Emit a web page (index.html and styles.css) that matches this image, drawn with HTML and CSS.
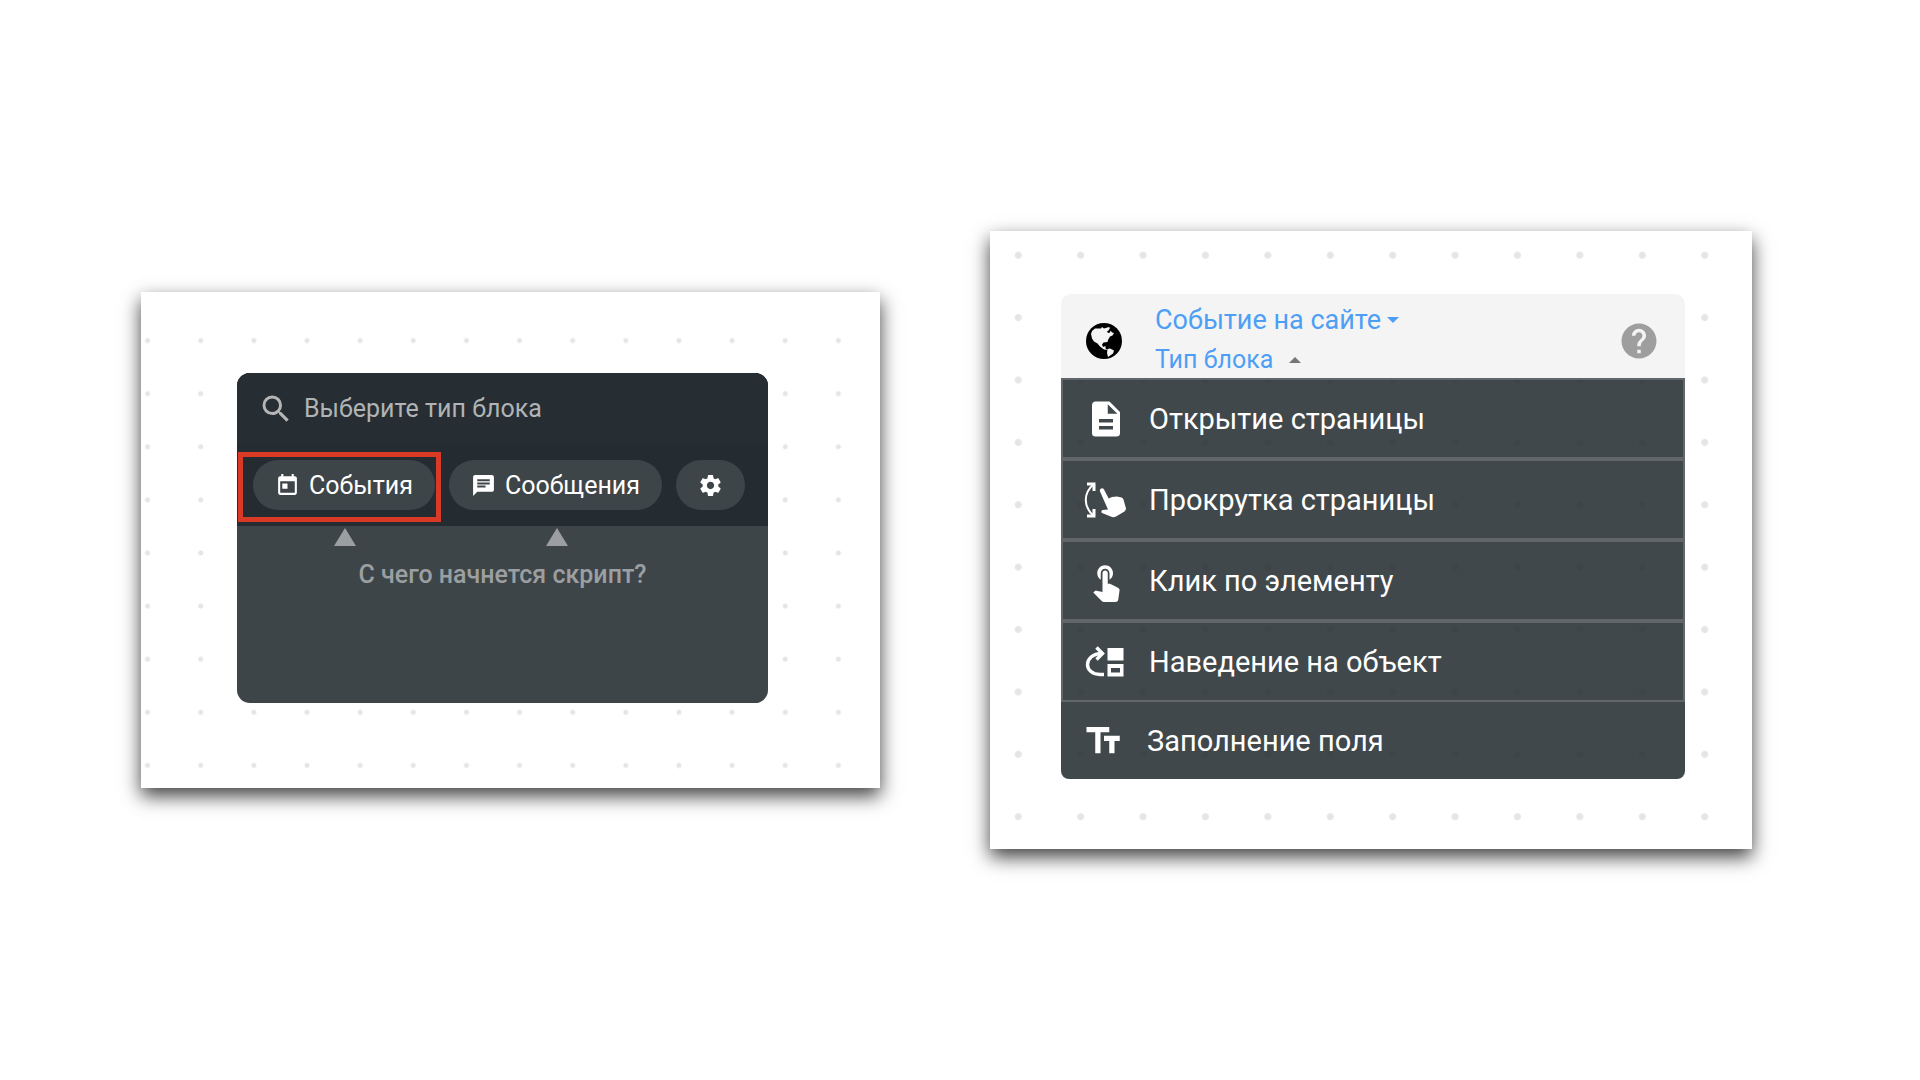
FILE: index.html
```html
<!DOCTYPE html>
<html lang="ru">
<head>
  <meta charset="UTF-8">
  <meta name="viewport" content="width=device-width, initial-scale=1.0">
  <title>Конструктор скриптов</title>
  <link rel="stylesheet" href="styles.css">
</head>
<body>
  <main class="boards">
    <section class="board board-start">
      <div class="picker">
        <div class="picker-head">
          <label class="search">
            <svg class="search-icon" viewBox="0 0 24 24"><path d="M15.5 14h-.79l-.28-.27A6.47 6.47 0 0 0 16 9.5 6.5 6.5 0 1 0 9.5 16c1.61 0 3.09-.59 4.23-1.57l.27.28v.79l5 4.99L20.49 19l-4.99-5zm-6 0C7.01 14 5 11.99 5 9.5S7.01 5 9.5 5 14 7.01 14 9.5 11.99 14 9.5 14z"/></svg>
            <input type="text" placeholder="Выберите тип блока" aria-label="Выберите тип блока">
          </label>
          <div class="tabs">
            <button type="button" class="tab tab-marked">
              <svg class="tab-icon" viewBox="0 0 24 24"><path d="M19 3h-1V1h-2v2H8V1H6v2H5c-1.11 0-1.99.9-1.99 2L3 19c0 1.1.89 2 2 2h14c1.1 0 2-.9 2-2V5c0-1.1-.9-2-2-2zm0 16H5V8h14v11zM7 10h5v5H7z"/></svg>
              События
            </button>
            <button type="button" class="tab">
              <svg class="tab-icon" viewBox="0 0 24 24"><path d="M20 2H4c-1.1 0-1.99.9-1.99 2L2 22l4-4h14c1.1 0 2-.9 2-2V4c0-1.1-.9-2-2-2zM6 9h12v2H6V9zm8 5H6v-2h8v2zm4-6H6V6h12v2z"/></svg>
              Сообщения
            </button>
            <button type="button" class="tab" aria-label="Настройки">
              <svg class="tab-icon" viewBox="0 0 24 24"><path d="M19.43 12.98c.04-.32.07-.64.07-.98s-.03-.66-.07-.98l2.11-1.65c.19-.15.24-.42.12-.64l-2-3.46c-.12-.22-.39-.3-.61-.22l-2.49 1c-.52-.4-1.08-.73-1.69-.98l-.38-2.65C14.46 2.18 14.25 2 14 2h-4c-.25 0-.46.18-.49.42l-.38 2.65c-.61.25-1.17.59-1.69.98l-2.49-1c-.23-.09-.49 0-.61.22l-2 3.46c-.13.22-.07.49.12.64l2.11 1.65c-.04.32-.07.65-.07.98s.03.66.07.98l-2.11 1.65c-.19.15-.24.42-.12.64l2 3.46c.12.22.39.3.61.22l2.49-1c.52.4 1.08.73 1.69.98l.38 2.65c.03.24.24.42.49.42h4c.25 0 .46-.18.49-.42l.38-2.65c.61-.25 1.17-.59 1.69-.98l2.49 1c.23.09.49 0 .61-.22l2-3.46c.12-.22.07-.49-.12-.64l-2.11-1.65zM12 15.5c-1.93 0-3.5-1.57-3.5-3.5s1.57-3.5 3.5-3.5 3.5 1.57 3.5 3.5-1.57 3.5-3.5 3.5z"/></svg>
            </button>
          </div>
        </div>
        <div class="picker-body">
          <div class="pointers">
            <svg viewBox="0 0 22 18"><path d="M11 0l11 18H0z"/></svg>
            <svg viewBox="0 0 22 18"><path d="M11 0l11 18H0z"/></svg>
          </div>
          <p class="question">С чего начнется скрипт?</p>
        </div>
      </div>
    </section>

    <section class="board board-event">
      <div class="block-head">
        <svg class="globe" viewBox="0 0 36 36">
          <circle cx="18" cy="18" r="18"/>
          <path class="land" d="M6 8L9 5.500 15 5.500 16 4 18 5.500 23 4 24 5 22.500 7.500 21 8.500 22 10 24 9.500 24.500 7.500 26 9.500 28 10 26.500 12.500 24 13.500 22 17 21.500 19 17.500 19.500 16 21.500 17 24 19.500 23 19.500 25.500 21.500 27 18 26.500 14 23.500 11.500 20.500 8 18.500 6 15.500 5 11z"/>
          <path class="land" d="M21.500 26l2.500-.500 4 2-1 3-5 3.500-1-4z"/>
        </svg>
        <div class="titles">
          <button type="button" class="title">Событие на сайте <svg class="caret" viewBox="0 0 12 6"><path d="M0 0h12L6 6z"/></svg></button>
          <button type="button" class="subtitle">Тип блока <svg class="caret caret-up" viewBox="0 0 12 6"><path d="M0 6h12L6 0z"/></svg></button>
        </div>
        <button type="button" class="help" aria-label="Справка">
          <svg viewBox="0 0 24 24"><path d="M12 2C6.48 2 2 6.48 2 12s4.48 10 10 10 10-4.48 10-10S17.52 2 12 2zm1 17h-2v-2h2v2zm2.07-7.75l-.9.92C13.45 12.9 13 13.5 13 15h-2v-.5c0-1.1.45-2.1 1.17-2.83l1.24-1.26c.37-.36.59-.86.59-1.41 0-1.1-.9-2-2-2s-2 .9-2 2H8c0-2.21 1.79-4 4-4s4 1.79 4 4c0 .88-.36 1.68-.93 2.25z"/></svg>
        </button>
      </div>
      <div class="types">
        <button type="button" class="type">
          <svg class="type-icon" viewBox="0 0 24 24"><path d="M13 9h5.500L13 3.500V9M6 2h8l6 6v12a2 2 0 0 1-2 2H6a2 2 0 0 1-2-2V4c0-1.110.89-2 2-2m10 12v-2H8v2h8m0 4v-2H8v2h8z"/></svg>
          Открытие страницы
        </button>
        <button type="button" class="type">
          <svg class="type-icon" viewBox="0 0 42 42">
            <path class="line" stroke-width="2" d="M9 5C-2 14-2 28 9 37"/>
            <path class="line" stroke-width="3" d="M2 5h7v7M2 37h7v-7"/>
            <path d="M15 12.500C14 10 17.500 8 19 10.500l4.700 9 3.300-1.500 5-.500 4.500 1q1.500.500 2 2l2.500 9q0 1.700-1.500 3L31 37.500q-2 1-4 .500l-10-4q-1.500-1.500.500-3l5.500-.500z"/>
          </svg>
          Прокрутка страницы
        </button>
        <button type="button" class="type">
          <svg class="type-icon" viewBox="0 0 24 24"><path d="M9 11.240V7.500C9 6.120 10.120 5 11.500 5S14 6.120 14 7.500v3.740c1.210-.81 2-2.180 2-3.740C16 5.010 13.990 3 11.500 3S7 5.010 7 7.500c0 1.560.79 2.930 2 3.740zm9.840 4.630l-4.540-2.260c-.17-.07-.35-.11-.54-.11H13v-6c0-.83-.67-1.500-1.500-1.500S10 6.670 10 7.500v10.740l-3.430-.72c-.08-.01-.15-.03-.24-.03-.31 0-.59.13-.79.33l-.79.8 4.940 4.940c.27.27.65.44 1.060.44h6.790c.75 0 1.330-.55 1.440-1.280l.75-5.270c.01-.07.02-.14.02-.2 0-.62-.38-1.160-.91-1.380z"/></svg>
          Клик по элементу
        </button>
        <button type="button" class="type">
          <svg class="type-icon" viewBox="0 0 42 42">
            <path class="line" stroke-width="3.400" d="M19 33.500h-4C7.500 33.500 2.500 29 2.500 23.500S7.500 12.500 17 12.500"/>
            <path class="line" stroke-width="3.400" d="M11.500 6.500l6 6-6 6"/>
            <path fill-rule="evenodd" d="M22.500 7h16v12.500h-16zM22.500 23h16v12.500h-16zM26 27v4.500h9V27z"/>
          </svg>
          Наведение на объект
        </button>
        <button type="button" class="type type-last">
          <svg class="type-icon" viewBox="0 0 24 24"><path d="M2 4v3h5v12h3V7h5V4H2m19 5h-9v3h3v7h3v-7h3V9z"/></svg>
          Заполнение поля
        </button>
      </div>
    </section>
  </main>
</body>
</html>
```
FILE: styles.css
```css
* {
  box-sizing: border-box;
}
body {
  margin: 0;
  background-color: #fff;
  font-family: Roboto, sans-serif;
}
button {
  border: none;
  font-family: inherit;
  cursor: pointer;
}
svg {
  display: block;
  flex: none;
  overflow: visible;
  fill: currentColor;
}

.boards {
  display: grid;
  grid-template-columns: 739fr 762fr;
  gap: 110px;
  align-items: center;
  min-height: 100vh;
  padding: 40px 168px 40px 141px;
}
.board {
  position: relative;
  overflow: hidden;
  background-color: #fff;
  box-shadow: 0 8px 18px rgba(0, 0, 0, 0.75);
}
/* dotted canvas grid */
.board::before {
  content: "";
  position: absolute;
  background-image: radial-gradient(circle, #e5e5e5 2px, transparent 3px);
  background-size: 53px 53px;
  background-repeat: round;
}
.board-start {
  padding: 81px 112px 85px 96px;
}
.board-start::before {
  inset: 22px 15px -4px -20px;
}
.board-event {
  padding: 63px 67px 70px 71px;
}
.board-event::before {
  inset: -7px 16px 1px -3px;
  background-image: radial-gradient(circle, #e5e5e5 3px, transparent 4px);
  background-size: 62px 62px;
}

/* block picker */
.picker {
  position: relative;
  overflow: hidden;
  border-radius: 13px;
  background-color: #3e4548;
}
.picker-head {
  background-color: #252c31;
}
.search {
  display: flex;
  align-items: center;
  gap: 10px;
  height: 71px;
  padding: 0 21px;
  background-color: #272e33;
  color: #b5b5b5;
}
.search-icon {
  width: 36px;
  height: 36px;
}
.search input {
  flex: 1;
  min-width: 0;
  padding: 0;
  border: none;
  outline: none;
  background: none;
  color: #fff;
  font-family: inherit;
  font-size: 25px;
}
.search input::placeholder {
  color: #b1b4b5;
  opacity: 1;
}
.tabs {
  display: flex;
  gap: 14px;
  padding: 16px;
}
.tab {
  display: flex;
  align-items: center;
  gap: 9px;
  height: 50px;
  padding: 0 22px;
  border-radius: 25px;
  background-color: #3e4548;
  color: #fff;
  font-size: 25px;
}
.tab-marked {
  position: relative;
}
.tab-marked::after {
  content: "";
  position: absolute;
  inset: -8px -6px -12px -15px;
  border: 5px solid #d93a25;
}
.tab-icon {
  width: 25px;
  height: 25px;
}
.picker-body {
  height: 177px;
  padding-top: 2px;
  color: #9c9fa1;
}
.pointers {
  display: flex;
  gap: 190px;
  padding-left: 97px;
}
.pointers svg {
  width: 22px;
  height: 18px;
}
.question {
  margin: 13px 0 0;
  text-align: center;
  font-size: 25px;
  font-weight: 500;
  line-height: 32px;
}

/* event block with the open list of types */
.block-head {
  position: relative;
  display: flex;
  align-items: center;
  height: 84px;
  padding: 0 25px;
  border-radius: 10px 10px 0 0;
  background-color: #f4f4f4;
}
.globe {
  width: 36px;
  height: 36px;
  margin-top: 10px;
  color: #000;
}
.land {
  fill: #f4f4f4;
}
.titles {
  flex: 1;
  display: flex;
  flex-direction: column;
  align-items: flex-start;
  padding: 8px 0 0 33px;
}
.title, .subtitle {
  display: flex;
  align-items: center;
  gap: 6px;
  padding: 0;
  background: none;
  color: #4d9ff5;
  font-size: 27px;
  line-height: 40px;
}
.subtitle {
  gap: 16px;
  font-size: 25px;
}
.caret {
  width: 12px;
  height: 6px;
}
.caret-up {
  color: #757575;
}
.help {
  padding: 0;
  margin-top: 10px;
  background: none;
  color: #9e9e9e;
}
.help svg {
  width: 42px;
  height: 42px;
}
.types {
  position: relative;
  overflow: hidden;
  border-radius: 0 0 8px 8px;
}
.type {
  display: flex;
  align-items: center;
  gap: 22px;
  width: 100%;
  height: 81px;
  padding: 0 22px;
  border: 2px solid #61666a;
  background-color: rgba(36, 45, 48, 0.87);
  color: #fff;
  font-size: 29px;
}
.type-last {
  height: 77px;
  border: none;
}
.type-icon {
  width: 42px;
  height: 42px;
}
.line {
  fill: none;
  stroke: currentColor;
}
```
